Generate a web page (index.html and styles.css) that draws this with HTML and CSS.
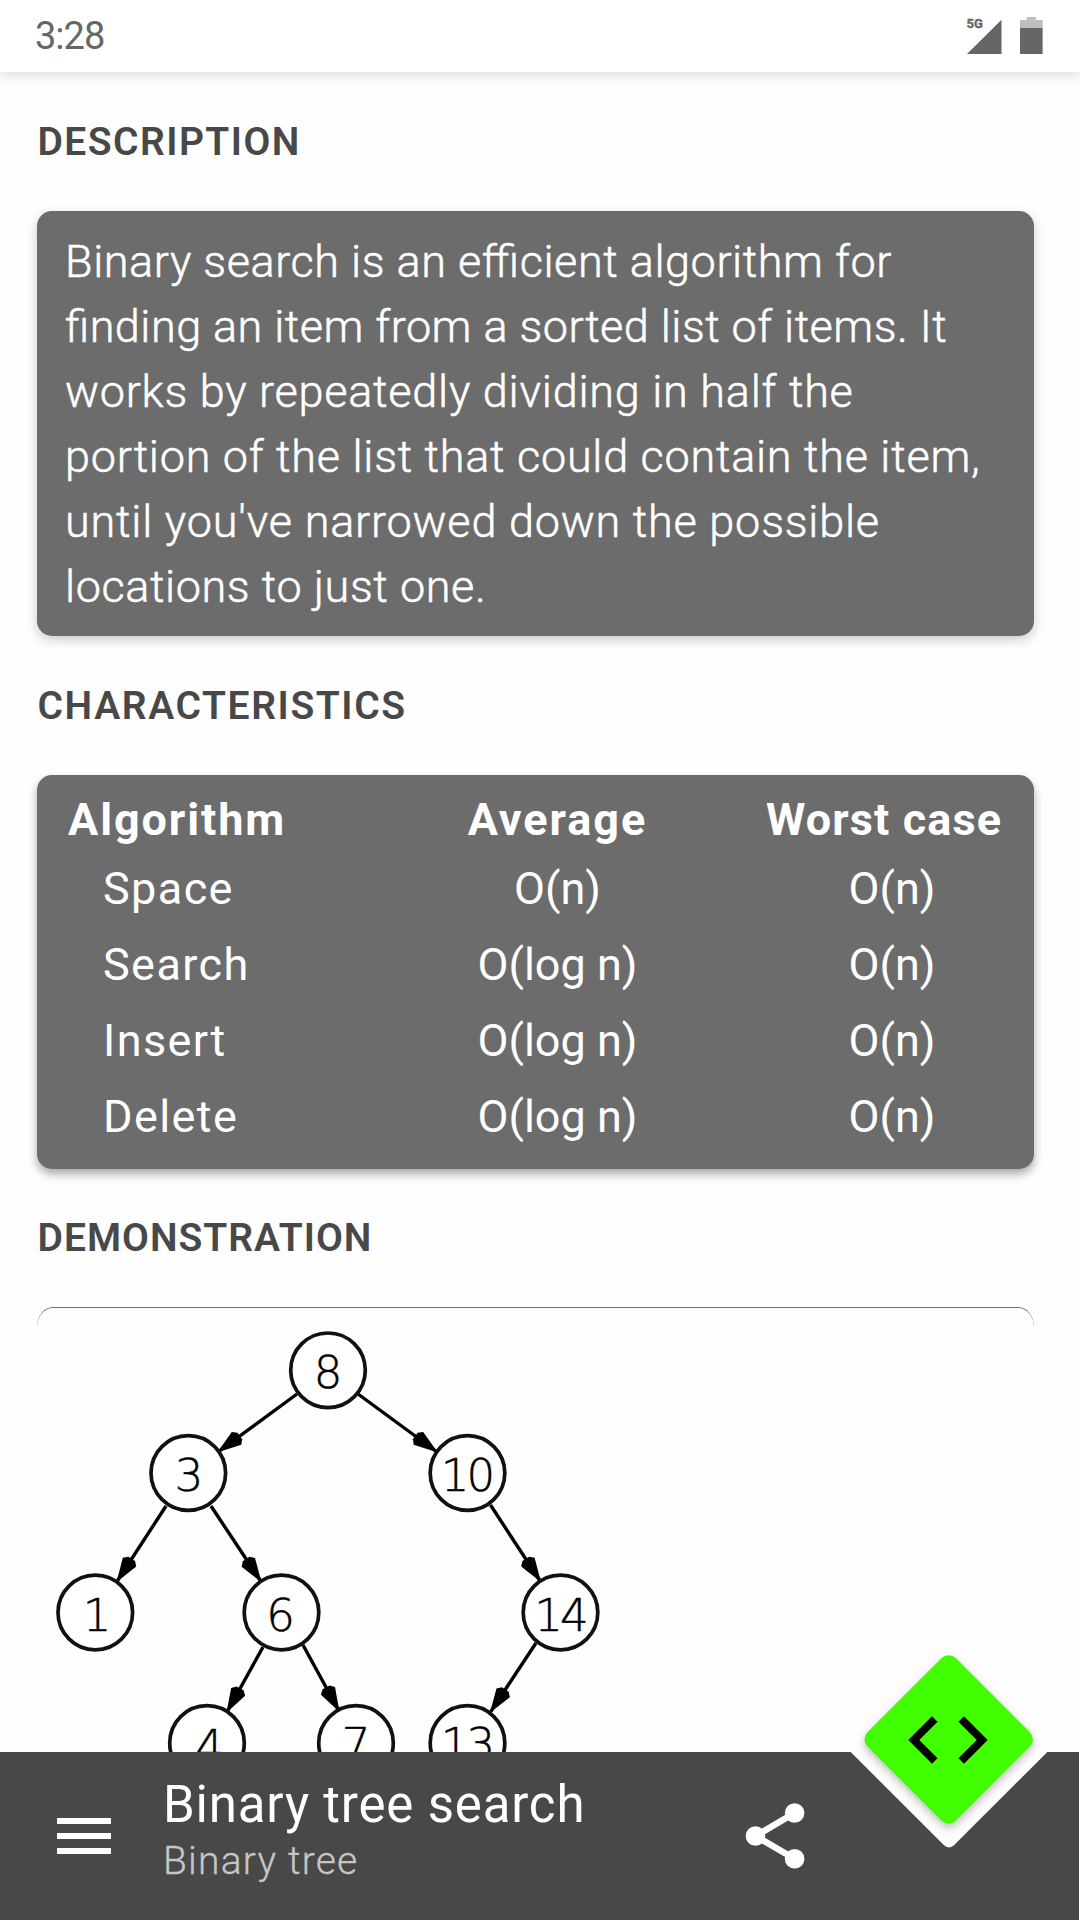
FILE: index.html
```html
<!DOCTYPE html>
<html lang="en">
<head>
<meta charset="utf-8">
<title>Binary tree search</title>
<link rel="stylesheet" href="styles.css">
</head>
<body>
<div class="app">
  <header class="status">
    <span class="time">3:28</span>
    <svg class="status-icons" width="78" height="40" viewBox="966 16 78 40">
      <text class="network" x="966.5" y="28.2" textLength="16.3" lengthAdjust="spacingAndGlyphs">5G</text>
      <path d="M967 54 1001.5 19.7V54z" fill="#666"/>
      <path d="M1020 28.5V20h6.7v-3h9.3v3h6.8v8.500z" fill="#bfbfbf"/>
      <path d="M1020 28h22.600v26H1020z" fill="#666"/>
    </svg>
  </header>

  <main class="content">
    <h2 class="heading">DESCRIPTION</h2>
    <p class="card description">
      <span class="line l1">Binary search is an efficient algorithm for</span>
      <span class="line l2">finding an item from a sorted list of items. It</span>
      <span class="line l3">works by repeatedly dividing in half the</span>
      <span class="line l4">portion of the list that could contain the item,</span>
      <span class="line l5">until you've narrowed down the possible</span>
      <span class="line l6">locations to just one.</span>
    </p>

    <h2 class="heading wide">CHARACTERISTICS</h2>
    <div class="card table">
      <div class="row head"><span>Algorithm</span><span>Average</span><span class="worst">Worst case</span></div>
      <div class="row"><span>Space</span><span>O(n)</span><span>O(n)</span></div>
      <div class="row"><span>Search</span><span>O(log n)</span><span>O(n)</span></div>
      <div class="row"><span>Insert</span><span>O(log n)</span><span>O(n)</span></div>
      <div class="row"><span>Delete</span><span>O(log n)</span><span>O(n)</span></div>
    </div>

    <h2 class="heading tight">DEMONSTRATION</h2>
    <div class="demo">
      <svg class="tree" width="997" height="444" viewBox="37 1308 997 444">
        <defs>
          <marker id="arrow" markerUnits="userSpaceOnUse" markerWidth="30" markerHeight="20" refX="28" refY="10" orient="auto">
            <path d="M29 10 5 2 1 6V14L5 18z"/>
          </marker>
        </defs>
        <g class="edges">
          <path d="M297 1394 218 1452"/>
          <path d="M358 1394 437 1452"/>
          <path d="M166 1506 117 1581.500"/>
          <path d="M211 1506 261 1581.500"/>
          <path d="M490.500 1505 540.500 1581.500"/>
          <path d="M263 1647 227 1712"/>
          <path d="M303 1645 339 1711"/>
          <path d="M536 1643 490.500 1712"/>
        </g>
        <g class="nodes">
          <circle cx="328" cy="1370.300" r="37.300"/>
          <circle cx="188.300" cy="1473" r="37.300"/>
          <circle cx="467.500" cy="1473" r="37.300"/>
          <circle cx="95.300" cy="1612.500" r="37.300"/>
          <circle cx="281.500" cy="1612.500" r="37.300"/>
          <circle cx="560.500" cy="1612.500" r="37.300"/>
          <circle cx="207" cy="1743" r="37.300"/>
          <circle cx="356" cy="1743" r="37.300"/>
          <circle cx="467.500" cy="1743" r="37.300"/>
        </g>
        <g class="labels">
          <text x="326.500" y="1387.500">8</text>
          <text x="187.500" y="1490.500">3</text>
          <text x="466.500" y="1490.500">10</text>
          <text x="95.500" y="1630.500">1</text>
          <text x="279" y="1630.500">6</text>
          <text x="560" y="1630.500">14</text>
          <text x="208" y="1762">4</text>
          <text x="354.500" y="1759.500">7</text>
          <text x="466.500" y="1759.500">13</text>
        </g>
      </svg>
    </div>
  </main>

  <footer class="bar">
    <svg class="menu" width="54" height="36" viewBox="0 0 54 36"><path d="M0 0h54v6H0zM0 15h54v6H0zM0 30h54v6H0z" fill="#fff"/></svg>
    <div class="titles">
      <div class="title">Binary tree search</div>
      <div class="subtitle">Binary tree</div>
    </div>
    <svg class="share" width="60" height="66" viewBox="745 1803 60 66">
      <path d="M794.500 1813 755.500 1836 794.500 1858.700" fill="none" stroke="#fff" stroke-width="6.500"/>
      <g fill="#fff"><circle cx="755.500" cy="1836" r="9.800"/><circle cx="794.600" cy="1813" r="9.800"/><circle cx="794.600" cy="1858.700" r="9.800"/></g>
    </svg>
    <div class="notch"></div>
    <div class="fab">
      <div class="diamond"></div>
      <svg class="code" width="80" height="48" viewBox="908 1716 80 48"><path d="M908.300 1740 932 1716.300 937.500 1721.800 919.300 1740 937.500 1758.200 932 1763.700zM987.700 1740 964 1716.300 958.500 1721.800 976.700 1740 958.500 1758.200 964 1763.700z"/></svg>
    </div>
  </footer>
</div>
</body>
</html>
```
FILE: styles.css
```css
* { box-sizing: border-box; }
body { margin: 0; background: #fff; font-family: Roboto, "Liberation Sans", sans-serif; }
svg { display: block; }

.app { width: 1080px; height: 1920px; display: flex; flex-direction: column; overflow: hidden; background: #fefefe; }

.status {
  flex: none; height: 72px; padding: 0 36px 0 35px;
  display: flex; align-items: center; justify-content: space-between;
  background: #fff; box-shadow: 0 4px 10px rgba(0, 0, 0, .12);
}
.time { font-size: 38px; letter-spacing: -1px; color: #666; }
.network { font: 700 12.5px Roboto, sans-serif; fill: #666; stroke: #666; stroke-width: .4px; }

.content { flex: 1; min-height: 0; overflow: hidden; padding: 0 46px 0 37px; }
.heading {
  margin: 0; height: 139px; padding: 47px 0 0 .5px;
  font-size: 39px; line-height: 46px; font-weight: 600; letter-spacing: 1.45px; color: #484848;
}
.heading.wide { letter-spacing: 1.6px; }
.heading.tight { height: 138px; padding-top: 46px; letter-spacing: 1px; }

.card {
  margin: 0; border-radius: 15px; background: #6c6c6c; color: #fff; font-size: 45px;
  box-shadow: 0 4px 12px rgba(0, 0, 0, .2);
}
.description {
  height: 425px; padding: 18px 0 0 28px;
  font-weight: 300; line-height: 65px; font-feature-settings: "liga" 1;
  -webkit-text-stroke: .5px #fff;
}
.line { display: block; white-space: nowrap; }
.l1 { letter-spacing: .55px; }
.l2 { letter-spacing: .47px; }
.l3 { letter-spacing: .75px; }
.l4 { letter-spacing: .73px; }
.l5 { letter-spacing: .79px; }
.l6 { letter-spacing: .58px; }

.table { height: 394px; padding: 14px 16px 0 31px; box-shadow: 0 5px 10px rgba(0, 0, 0, .34); }
.row { display: grid; grid-template-columns: 281px 417px 252px; line-height: 76px; text-align: center; white-space: nowrap; }
.row span:first-child { text-align: left; padding-left: 35px; letter-spacing: 1.4px; }
.row.head { line-height: 62px; font-weight: 700; letter-spacing: 1.95px; }
.row.head span:first-child { padding-left: 0; letter-spacing: 1.9px; }
.row.head .worst { padding-right: 20px; letter-spacing: 1.1px; }

.demo { height: 445px; border-top: 1px solid #6c6c6c; border-radius: 16px 16px 0 0 / 20px 20px 0 0; }
.edges path { fill: none; stroke: #000; stroke-width: 3.4; marker-end: url(#arrow); }
.nodes circle { fill: #fff; stroke: #111; stroke-width: 3.7; }
.labels text { font: 200 45px "DejaVu Sans", sans-serif; letter-spacing: -3px; text-anchor: middle; stroke: #000; stroke-width: .5px; }

.bar {
  position: relative; flex: none; width: 1079px; height: 168px; padding-left: 57px;
  display: flex; align-items: flex-start; background: #484848;
}
.menu { margin-top: 66px; }
.titles { width: 583px; padding: 23px 0 0 52px; white-space: nowrap; }
.title { font-size: 51px; line-height: 60px; letter-spacing: .82px; color: #fff; }
.subtitle { margin-top: 3px; font-size: 39px; line-height: 46px; font-weight: 300; letter-spacing: 1.2px; color: #c6c6c6; -webkit-text-stroke: .3px #c6c6c6; }
.share { margin: 51px 0 0 51px; }

/* Floating action button and the cut-out it sits in */
.notch {
  position: absolute; left: 870.5px; top: -90.5px; width: 156px; height: 156px;
  border-radius: 7px; background: #fefefe; transform: rotate(45deg);
}
.fab {
  position: absolute; left: 885.8px; top: -74.7px; width: 125.4px; height: 125.4px;
  display: grid; place-items: center; filter: drop-shadow(0 4px 4px rgba(0, 0, 0, .25));
}
.diamond, .code { grid-area: 1 / 1; }
.diamond { width: 125.4px; height: 125.4px; border-radius: 10px; background: #42ff00; transform: rotate(45deg); }
.code { position: relative; }
```
